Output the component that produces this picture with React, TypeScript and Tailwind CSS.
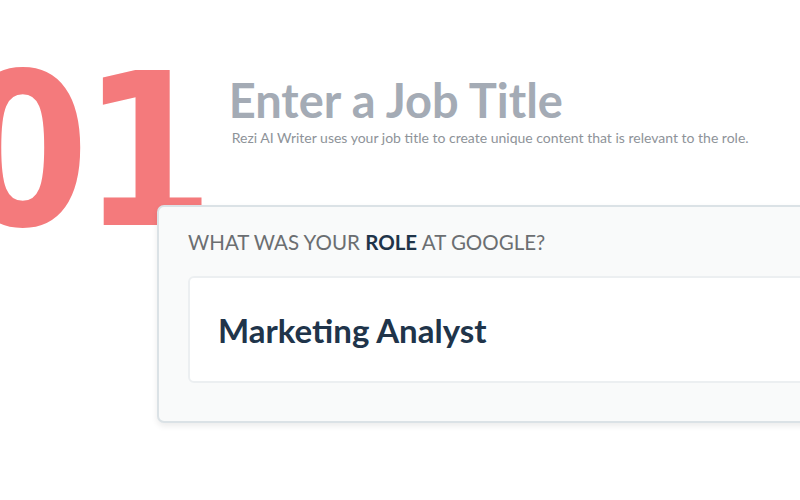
export default function App() {
  return (
    <div className="w-[800px] h-[500px] overflow-hidden bg-white relative">
      <div className="flex items-start h-[205px]">
        <span
          className="-ml-[44px] mt-[45px] text-[213px] leading-none font-bold text-[#f47a7c] tracking-[-8px] shrink-0"
          style={{ fontFamily: '"DejaVu Sans Condensed", "DejaVu Sans", sans-serif' }}
        >
          01
        </span>
        <div className="ml-[22px] mt-[72px] shrink-0" style={{ fontFamily: 'Lato, sans-serif' }}>
          <h1 className="text-[47px] leading-[56px] font-bold text-[#a4abb5]">Enter a Job Title</h1>
          <p className="mt-[-1px] ml-[3px] text-[14px] whitespace-nowrap text-[#8e9399]">
            Rezi AI Writer uses your job title to create unique content that is relevant to the role.
          </p>
        </div>
      </div>
      <div
        className="relative z-10 ml-[157px] w-[700px] h-[218px] bg-[#f9fafa] border-2 border-[#dbe2e6] rounded-[7px] shadow-[0_3px_6px_rgba(0,0,0,0.08)] pl-[29px] pt-[20px]"
        style={{ fontFamily: 'Lato, sans-serif' }}
      >
        <div className="text-[20.5px] text-[#6b6e71]">
          WHAT WAS YOUR <span className="font-bold text-[#1f3449]">ROLE</span> AT GOOGLE?
        </div>
        <div className="mt-[18px] h-[107px] bg-white border-2 border-[#eceff1] rounded-[6px] pl-[28px] pt-[28px]">
          <span className="text-[33px] font-bold text-[#20344a]">Marketing Analyst</span>
        </div>
      </div>
    </div>
  )
}
